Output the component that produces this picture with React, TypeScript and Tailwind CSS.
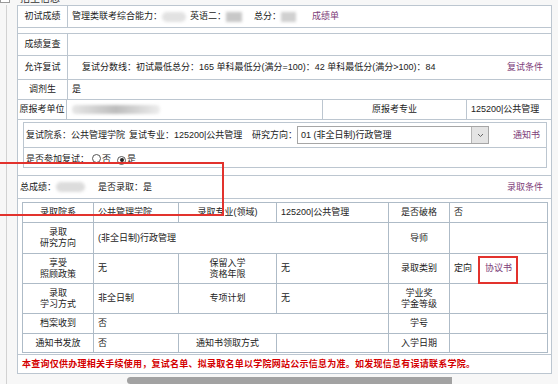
import React from "react";

const LINE = "border-[#bcc6d0]";

function Blob({ className }: { className: string }) {
  return <span className={"inline-block blur-[1.5px] " + className} />;
}

function Radio({ checked }: { checked?: boolean }) {
  return (
    <span className="inline-flex h-[9px] w-[9px] items-center justify-center rounded-full border border-[#555] bg-white">
      {checked ? <span className="h-[4px] w-[4px] rounded-full bg-[#222]" /> : null}
    </span>
  );
}

function Td({
  children,
  center,
  colSpan,
  className = "",
}: {
  children?: React.ReactNode;
  center?: boolean;
  colSpan?: number;
  className?: string;
}) {
  return (
    <td
      colSpan={colSpan}
      className={
        "border border-[#aebbc7] p-0 align-middle " +
        (center ? "text-center " : "pl-[4px] text-left ") +
        className
      }
    >
      {children}
    </td>
  );
}

export default function App() {
  return (
    <div className="relative h-[384px] w-[558px] overflow-hidden bg-[#f7f7f7] font-['Liberation_Sans','Noto_Sans_CJK_SC',sans-serif] text-[9px] leading-[11px] text-[#222]">
      {/* clipped header strip */}
      <div className="flex h-[5px] items-end overflow-hidden">
        <div className="mb-[2px] h-[9px] w-[10px] border border-[#9a9a9a] bg-white" />
        <div className="mb-[1px] ml-[10px] text-[10px] leading-[10px] text-[#333]">招生信息</div>
      </div>

      <div className="flex">
        <div className="w-[6px]" />
        <div className="flex flex-col border-l border-[#d2d2d2] pl-[10px]">
          {/* main box */}
          <div className={"w-[535px] border bg-white " + LINE}>
            {/* Row A */}
            <div className={"flex h-[22px] border-b " + LINE}>
              <div className={"flex w-[50px] items-center justify-center border-r " + LINE}>初试成绩</div>
              <div className="flex flex-1 items-center whitespace-nowrap pl-[4px]">
                <span>管理类联考综合能力：</span>
                <Blob className="h-[10px] w-[24px] rounded-[5px] bg-[#e2e2e2]" />
                <span className="ml-[4px]">英语二：</span>
                <Blob className="h-[10px] w-[16px] bg-[#c8c8c8]" />
                <span className="ml-[12px]">总分：</span>
                <Blob className="h-[10px] w-[15px] bg-[#d0d0d0]" />
                <span className="ml-[16px] text-[#7d3c78]">成绩单</span>
              </div>
            </div>
            {/* Row B gap */}
            <div className={"h-[6px] border-b " + LINE} />
            {/* Row C */}
            <div className={"flex h-[22px] border-b " + LINE}>
              <div className={"flex w-[50px] items-center justify-center border-r " + LINE}>成绩复查</div>
              <div className="flex-1" />
            </div>
            {/* Row D */}
            <div className={"flex h-[24px] border-b " + LINE}>
              <div className={"flex w-[50px] items-center justify-center border-r " + LINE}>允许复试</div>
              <div className="flex flex-1 items-center whitespace-nowrap pl-[14px] pr-[8px]">
                <span>复试分数线：初试最低总分：165 单科最低分(满分=100)：42 单科最低分(满分&gt;100)：84</span>
                <span className="ml-auto text-[#7d3c78]">复试条件</span>
              </div>
            </div>
            {/* Row E */}
            <div className={"flex h-[20px] border-b " + LINE}>
              <div className={"flex w-[50px] items-center justify-center border-r " + LINE}>调剂生</div>
              <div className="flex flex-1 items-center pl-[4px]">是</div>
            </div>
            {/* Row F */}
            <div className={"flex h-[20px] border-b " + LINE}>
              <div className={"flex w-[49px] items-center justify-center whitespace-nowrap border-r " + LINE}>原报考单位</div>
              <div className={"flex w-[256px] items-center border-r pl-[5px] " + LINE}>
                <Blob className="h-[9px] w-[88px] rounded-[4px] bg-gradient-to-r from-[#e6e6e6] via-[#bdbdbd] to-[#ededed]" />
              </div>
              <div className={"flex w-[144px] items-center justify-center border-r " + LINE}>原报考专业</div>
              <div className="flex flex-1 items-center pl-[4px]">125200|公共管理</div>
            </div>
            {/* Section G */}
            <div className={"h-[56px] border-b pl-[5px] pt-[2px] " + LINE}>
              <div className={"h-[46px] w-[524px] overflow-hidden border " + LINE}>
                <div className={"flex h-[25px] items-center whitespace-nowrap border-b pl-[2px] " + LINE}>
                  <span className="w-[103px]">复试院系：公共管理学院</span>
                  <span className="w-[123px]">复试专业：125200|公共管理</span>
                  <span className="w-[45px]">研究方向：</span>
                  <div className="flex h-[18px] w-[192px] items-stretch border border-[#a6a6a6] bg-white">
                    <span className="flex flex-1 items-center pl-[3px]">01 (非全日制)行政管理</span>
                    <span className="flex w-[17px] items-center justify-center border-l border-[#b5b5b5] bg-[#e4e4e4]">
                      <svg width="7" height="5" viewBox="0 0 7 5">
                        <path d="M1 1 L3.5 3.5 L6 1" fill="none" stroke="#666" strokeWidth="1" />
                      </svg>
                    </span>
                  </div>
                  <span className="ml-auto pr-[6px] text-[#7d3c78]">通知书</span>
                </div>
                <div className="flex h-[19px] items-center whitespace-nowrap pl-[2px] pt-[4px]">
                  <span>是否参加复试：</span>
                  <span className="ml-[3px]">
                    <Radio />
                  </span>
                  <span className="ml-[1px]">否</span>
                  <span className="ml-[6px]">
                    <Radio checked />
                  </span>
                  <span className="ml-[1px]">是</span>
                </div>
              </div>
            </div>
            {/* Section H */}
            <div className={"flex h-[23px] items-center whitespace-nowrap border-b pl-[2px] pr-[8px] " + LINE}>
              <span>总成绩：</span>
              <Blob className="h-[10px] w-[29px] rounded-[5px] bg-[#dcdcdc]" />
              <span className="ml-[13px]">是否录取：是</span>
              <span className="ml-auto text-[#7d3c78]">录取条件</span>
            </div>
            {/* Section I */}
            <div className={"h-[156px] border-b pl-[4px] pt-[3px] " + LINE}>
              <table className="w-[525px] table-fixed border-collapse">
                <colgroup>
                  <col className="w-[71px]" />
                  <col className="w-[85px]" />
                  <col className="w-[98px]" />
                  <col className="w-[112px]" />
                  <col className="w-[61px]" />
                  <col className="w-[98px]" />
                </colgroup>
                <tbody>
                  <tr className="h-[20px]">
                    <Td center>录取院系</Td>
                    <Td>公共管理学院</Td>
                    <Td center>录取专业(领域)</Td>
                    <Td>125200|公共管理</Td>
                    <Td center>是否破格</Td>
                    <Td>否</Td>
                  </tr>
                  <tr className="h-[31px]">
                    <Td center>
                      录取
                      <br />
                      研究方向
                    </Td>
                    <Td colSpan={3}>(非全日制)行政管理</Td>
                    <Td center>导师</Td>
                    <Td />
                  </tr>
                  <tr className="h-[30px]">
                    <Td center>
                      享受
                      <br />
                      照顾政策
                    </Td>
                    <Td>无</Td>
                    <Td center>
                      保留入学
                      <br />
                      资格年限
                    </Td>
                    <Td>无</Td>
                    <Td center>录取类别</Td>
                    <Td>
                      定向<span className="ml-[13px] text-[#7d3c78]">协议书</span>
                    </Td>
                  </tr>
                  <tr className="h-[30px]">
                    <Td center>
                      录取
                      <br />
                      学习方式
                    </Td>
                    <Td>非全日制</Td>
                    <Td center>专项计划</Td>
                    <Td>无</Td>
                    <Td center>
                      学业奖
                      <br />
                      学金等级
                    </Td>
                    <Td />
                  </tr>
                  <tr className="h-[20px]">
                    <Td center>档案收到</Td>
                    <Td colSpan={3}>否</Td>
                    <Td center>学号</Td>
                    <Td />
                  </tr>
                  <tr className="h-[19px]">
                    <Td center>通知书发放</Td>
                    <Td>否</Td>
                    <Td center>通知书领取方式</Td>
                    <Td />
                    <Td center>入学日期</Td>
                    <Td />
                  </tr>
                </tbody>
              </table>
            </div>
            {/* Section J */}
            <div className="flex h-[18px] items-center whitespace-nowrap pl-[4px] font-bold tracking-[0.25px] text-[#d40000]">
              本查询仅供办理相关手续使用，复试名单、拟录取名单以学院网站公示信息为准。如发现信息有误请联系学院。
            </div>
          </div>
          {/* horizontal scrollbar */}
          <div className="mt-[3px] ml-[110px] h-[7px] w-[325px] rounded-l-full rounded-r-[3px] bg-[#a2a2a2]" />
        </div>
      </div>

      {/* red annotations */}
      <div className="absolute left-0 top-[162px] h-[2px] w-[224px] bg-[#e2322d]" />
      <div className="absolute left-[222px] top-[162px] h-[54px] w-[2px] bg-[#e2322d]" />
      <div className="absolute left-0 top-[214px] h-[2px] w-[224px] bg-[#e2322d]" />
      <div className="absolute left-[478px] top-[256px] h-[28px] w-[40px] border-2 border-[#e2322d]" />
    </div>
  );
}
